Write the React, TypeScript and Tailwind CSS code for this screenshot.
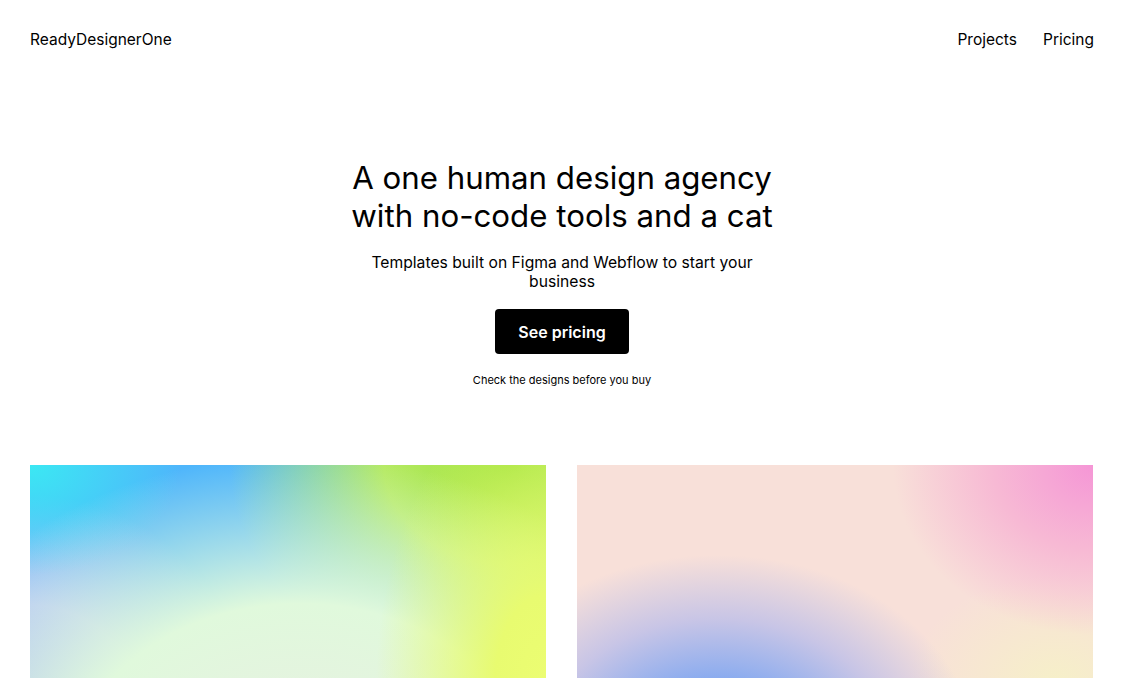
export default function App() {
  return (
    <div className="min-h-screen bg-white text-black">
      {/* Nav */}
      <header className="flex items-center justify-between px-[30px] pt-[30px] font-['Inter',sans-serif] text-[15.5px] leading-[20px]">
        <a href="#">ReadyDesignerOne</a>
        <nav className="flex items-center gap-[26px]">
          <a href="#">Projects</a>
          <a href="#">Pricing</a>
        </nav>
      </header>

      {/* Hero */}
      <section className="mt-[109px] flex flex-col items-center text-center font-['Inter',sans-serif]">
        <h1 className="text-[31.25px] leading-[38px] font-normal">
          A one human design agency
          <br />
          with no-code tools and a cat
        </h1>
        <p className="mt-[18px] w-[400px] text-[15.7px] leading-[19px]">
          Templates built on Figma and Webflow to start your business
        </p>
        <a
          href="#"
          className="mt-[18px] flex h-[45px] w-[134px] items-center justify-center rounded-[4px] bg-black text-[16px] font-semibold text-white"
        >
          See pricing
        </a>
        <p className="mt-[19px] text-[11px] leading-[14px]">Check the designs before you buy</p>
      </section>

      {/* Project cards */}
      <section className="mt-[78px] grid grid-cols-[516px_516px] gap-[31px] px-[30px] pb-10">
        <div className="h-[330px] bg-[radial-gradient(ellipse_170px_300px_at_516px_220px,#ecfd72_0%,#e8fb70_30%,transparent_100%),radial-gradient(ellipse_420px_330px_at_270px_320px,#ecebdc_0%,#e4f4df_30%,#e0f9dc_55%,transparent_100%),radial-gradient(ellipse_150px_110px_at_0px_0px,#3be8f3_0%,transparent_100%),radial-gradient(ellipse_280px_220px_at_480px_0px,#9ce13c_0%,#b5ea62_45%,transparent_100%),radial-gradient(ellipse_220px_220px_at_0px_250px,#a4b6f6_0%,#b2c4f8_50%,transparent_100%),linear-gradient(#4fb6fb,#4fb6fb)]" />
        <div className="h-[330px] bg-[radial-gradient(ellipse_260px_200px_at_140px_290px,#6f9ff0_0%,#84a9f0_35%,#c8c5e6_68%,transparent_100%),radial-gradient(ellipse_200px_170px_at_516px_0px,#f596d6_0%,#f7b9d4_50%,transparent_100%),radial-gradient(ellipse_150px_110px_at_480px_220px,#f6f0c8_0%,transparent_100%),linear-gradient(#f8e0d9,#f8e0d9)]" />
      </section>
    </div>
  );
}
